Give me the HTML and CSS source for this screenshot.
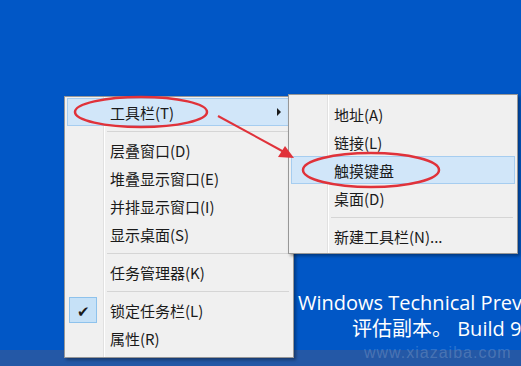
FILE: index.html
```html
<!DOCTYPE html>
<html lang="zh-CN">
<head>
    <meta charset="UTF-8">
    <title>任务栏菜单</title>
    <link rel="stylesheet" href="styles.css">
</head>
<body>
    <div class="desktop">
        <div class="wm">
            <div class="wm-title">Windows Technical Preview</div>
            <div class="wm-sub">评估副本。 Build 9841</div>
            <div class="wm-site">www.xiazaiba.com</div>
        </div>
        <div class="taskbar"></div>

        <ul class="menu menu-main">
            <li class="item active"><span class="ico"></span><span class="txt">工具栏(T)</span><span class="more"></span></li>
            <li class="sep"></li>
            <li class="item"><span class="ico"></span><span class="txt">层叠窗口(D)</span></li>
            <li class="item"><span class="ico"></span><span class="txt">堆叠显示窗口(E)</span></li>
            <li class="item"><span class="ico"></span><span class="txt">并排显示窗口(I)</span></li>
            <li class="item"><span class="ico"></span><span class="txt">显示桌面(S)</span></li>
            <li class="sep"></li>
            <li class="item"><span class="ico"></span><span class="txt">任务管理器(K)</span></li>
            <li class="sep"></li>
            <li class="item"><span class="ico checked">✔</span><span class="txt">锁定任务栏(L)</span></li>
            <li class="item"><span class="ico"></span><span class="txt">属性(R)</span></li>
        </ul>

        <ul class="menu menu-sub">
            <li class="item"><span class="ico"></span><span class="txt">地址(A)</span></li>
            <li class="item"><span class="ico"></span><span class="txt">链接(L)</span></li>
            <li class="item active"><span class="ico"></span><span class="txt">触摸键盘</span></li>
            <li class="item"><span class="ico"></span><span class="txt">桌面(D)</span></li>
            <li class="sep"></li>
            <li class="item"><span class="ico"></span><span class="txt">新建工具栏(N)...</span></li>
        </ul>

        <!-- red annotation marks -->
        <svg class="marks" width="521" height="366" viewBox="0 0 521 366">
            <ellipse cx="141" cy="112" rx="66" ry="15" fill="none" stroke="#e0323a" stroke-width="2.5"/>
            <ellipse cx="371" cy="170" rx="68" ry="17" fill="none" stroke="#e0323a" stroke-width="2.5"/>
            <line x1="218" y1="116" x2="284" y2="152" stroke="#e0323a" stroke-width="2"/>
            <polygon points="294,158 278,157 285,146" fill="#e0323a"/>
        </svg>
    </div>
</body>
</html>
```

FILE: styles.css
```css
body {
    margin: 0;
    font-family: "Noto Sans CJK SC", "Noto Sans", sans-serif;
}
.desktop {
    position: relative;
    width: 521px;
    height: 366px;
    overflow: hidden;
    background-color: #0157c6;
    display: flex;
    flex-direction: column;
}
.wm {
    position: relative;
    margin-top: auto;
    padding-left: 298px;
    padding-bottom: 8px;
    color: #fff;
    white-space: nowrap;
}
.wm-title {
    font-family: "Open Sans", "Noto Sans", sans-serif;
    font-size: 20px;
    line-height: 26px;
}
.wm-sub {
    padding-left: 54px;
    font-family: "Open Sans", "Noto Sans CJK SC", sans-serif;
    font-size: 20px;
    line-height: 26px;
}
.wm-site {
    position: absolute;
    left: 364px;
    bottom: -12px;
    font-family: "Liberation Sans", sans-serif;
    font-size: 16px;
    letter-spacing: 1px;
    color: rgba(255, 255, 255, 0.18);
}
.taskbar {
    height: 16px;
    background-color: #2458a6;
}
.menu {
    position: absolute;
    margin: 0;
    padding: 1px 2px 5px;
    list-style: none;
    background-color: #f0f0f0;
    background-image: linear-gradient(to right, transparent 38px, #e1e1e1 38px, #e1e1e1 39px, #fff 39px, #fff 40px, transparent 40px);
    border: 1px solid #979797;
    box-shadow: 2px 2px 3px rgba(0, 0, 0, 0.35);
    font-size: 15px;
    color: #1a1a1a;
}
.menu-main {
    left: 64px;
    top: 96px;
    width: 224px;
}
.menu-sub {
    left: 288px;
    top: 94px;
    width: 224px;
    padding-top: 5px;
    padding-bottom: 3px;
}
.item {
    box-sizing: border-box;
    display: flex;
    align-items: center;
    height: 28px;
    border: 1px solid transparent;
}
.item.active {
    background-color: #d1e6f9;
    border-color: #a6cdf0;
}
.ico {
    box-sizing: border-box;
    width: 28px;
    height: 26px;
    margin-left: 1px;
    display: flex;
    align-items: center;
    justify-content: center;
    font-size: 15px;
}
.ico.checked {
    background-color: #c6e1f7;
    border: 1px solid #8ec2ec;
    color: #1a1a1a;
}
.txt {
    margin-left: 13px;
}
.more {
    margin-left: auto;
    margin-right: 9px;
    width: 0;
    height: 0;
    border-top: 4px solid transparent;
    border-bottom: 4px solid transparent;
    border-left: 4px solid #1a1a1a;
}
.sep {
    height: 1px;
    margin: 5px 2px 4px 40px;
    background-color: #d5d5d5;
}
.marks {
    position: absolute;
    left: 0;
    top: 0;
}
```
